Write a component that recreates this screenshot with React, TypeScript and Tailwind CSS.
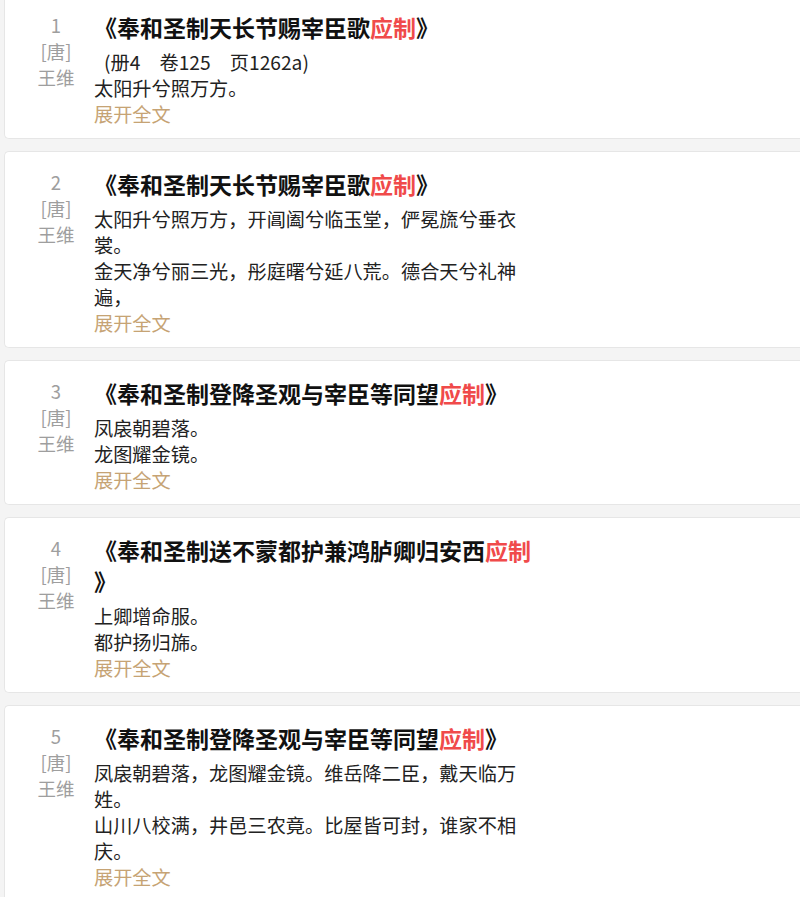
import React from 'react';

interface Poem {
  id: number;
  title: string;
  dynasty: string;
  author: string;
  source?: string;
  lines: string[];
}

const poems: Poem[] = [
  {
    id: 1,
    title: '奉和圣制天长节赐宰臣歌',
    dynasty: '唐',
    author: '王维',
    source: '(册4　卷125　页1262a)',
    lines: ['太阳升兮照万方。'],
  },
  {
    id: 2,
    title: '奉和圣制天长节赐宰臣歌',
    dynasty: '唐',
    author: '王维',
    lines: [
      '太阳升兮照万方，开阊阖兮临玉堂，俨冕旒兮垂衣裳。',
      '金天净兮丽三光，彤庭曙兮延八荒。德合天兮礼神遍，',
    ],
  },
  {
    id: 3,
    title: '奉和圣制登降圣观与宰臣等同望',
    dynasty: '唐',
    author: '王维',
    lines: ['凤扆朝碧落。', '龙图耀金镜。'],
  },
  {
    id: 4,
    title: '奉和圣制送不蒙都护兼鸿胪卿归安西',
    dynasty: '唐',
    author: '王维',
    lines: ['上卿增命服。', '都护扬归旆。'],
  },
  {
    id: 5,
    title: '奉和圣制登降圣观与宰臣等同望',
    dynasty: '唐',
    author: '王维',
    lines: [
      '凤扆朝碧落，龙图耀金镜。维岳降二臣，戴天临万姓。',
      '山川八校满，井邑三农竟。比屋皆可封，谁家不相庆。',
    ],
  },
];

const font = { fontFamily: '"Noto Sans CJK SC", "Noto Sans", sans-serif' };

const PoemCard: React.FC<{ poem: Poem }> = ({ poem }) => (
  <div className="ml-[4px] bg-white border border-r-0 border-[#e6e6e6] rounded-l-[5px] flex pl-[21px] pt-[17px] pb-[11px]">
    <div className="w-[60px] shrink-0 text-center text-[#9e9e9e] text-[18.5px] leading-[26px]">
      <div>{poem.id}</div>
      <div>[{poem.dynasty}]</div>
      <div>{poem.author}</div>
    </div>
    <div className="ml-[8px] w-[439px] text-[19.2px] leading-[26px] text-[#222]">
      <div className="text-[23px] leading-[31px] font-bold text-[#111] mb-[6px] [line-break:anywhere]">
        《{poem.title}
        <span className="text-[#f04a4a]">应制</span>》
      </div>
      {poem.source && <div className="pl-[10px]">{poem.source}</div>}
      {poem.lines.map((line, i) => (
        <div key={i}>{line}</div>
      ))}
      <div className="text-[#c6a374] cursor-pointer">展开全文</div>
    </div>
  </div>
);

export default function App() {
  return (
    <div className="bg-[#f4f4f4] min-h-screen overflow-hidden" style={font}>
      <div className="-mt-[6px] flex flex-col gap-[12px]">
        {poems.map((p) => (
          <PoemCard key={p.id} poem={p} />
        ))}
      </div>
    </div>
  );
}
